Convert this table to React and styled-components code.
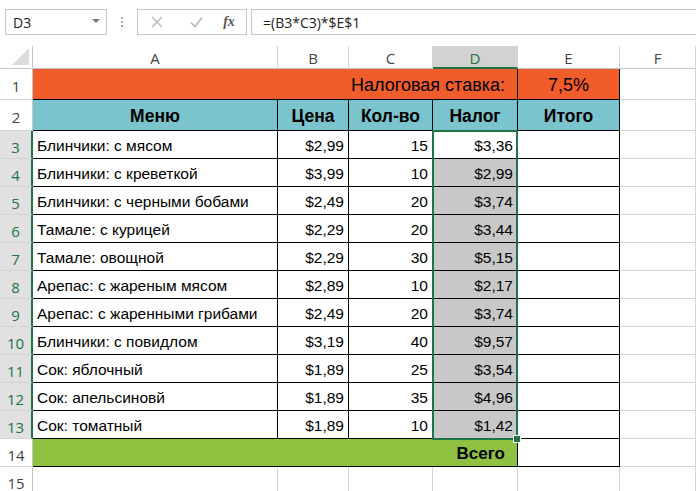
import styled, { createGlobalStyle, css } from 'styled-components'

const Global = createGlobalStyle`
  html, body { margin: 0; padding: 0; background: #fff; }
  body { width: 696px; height: 491px; overflow: hidden; font-family: "Liberation Sans", Arial, sans-serif; }
`

const GREEN = '#217346'
const GRID = '#d4d4d4'
const ORANGE = '#f15c2b'
const TEAL = '#7bc4cd'
const LIME = '#8dc13f'
const GREY = '#c8c8c8'

const TopBar = styled.div`
  display: flex;
  align-items: center;
  height: 46px;
  padding: 0 0 0 5px;
  box-sizing: border-box;
`
const NameBox = styled.div`
  display: flex;
  align-items: center;
  justify-content: space-between;
  width: 102px;
  height: 26px;
  margin-top: -2px;
  box-sizing: border-box;
  border: 1px solid #c6c6c6;
  padding: 0 6px 0 7px;
  font-family: "Open Sans", "Noto Sans", sans-serif;
  font-size: 14px;
  color: #222;
`
const Caret = styled.span`
  width: 0;
  height: 0;
  border-left: 4px solid transparent;
  border-right: 4px solid transparent;
  border-top: 4px solid #777;
  margin-top: -2px;
`
const Dots = styled.div`
  display: flex;
  flex-direction: column;
  gap: 2px;
  margin: -2px 14px 0 14px;
  span { width: 2px; height: 2px; background: #aaa; }
`
const FxBox = styled.div`
  display: flex;
  align-items: center;
  width: 110px;
  height: 26px;
  margin-top: -2px;
  box-sizing: border-box;
  border: 1px solid #c6c6c6;
`
const FxIcon = styled.span`
  width: 26px;
  display: flex;
  justify-content: center;
  color: #555;
  font-family: "Liberation Serif", serif;
  font-style: italic;
  font-size: 14px;
  font-weight: bold;
`
const Formula = styled.div`
  flex: 1;
  height: 26px;
  margin: -2px 0 0 4px;
  box-sizing: border-box;
  border: 1px solid #c6c6c6;
  border-right: none;
  display: flex;
  align-items: center;
  padding-left: 11px;
  font-family: "Open Sans", "Noto Sans", sans-serif;
  font-size: 14px;
  color: #222;
`

const Sheet = styled.div`
  position: relative;
  display: grid;
  grid-template-columns: 33px 245px 71px 84px 85px 102px 1fr;
  grid-template-rows: 23px 31px 31px repeat(13, 28px);
`

const Head = styled.div`
  box-sizing: border-box;
  display: flex;
  align-items: center;
  justify-content: center;
  font-family: "Open Sans", "Noto Sans", sans-serif;
  font-size: 15px;
  color: #444;
  background: #fff;
  border-right: 1px solid ${GRID};
  border-bottom: 1px solid #c6c6c6;
  ${(p) => p.$sel && css`
    background: #e1e1e1;
    color: ${GREEN};
  `}
`
const ColHead = styled(Head)`
  padding-top: 2px;
  ${(p) => p.$sel && css`
    background: #d2d2d2;
    border-bottom: 2px solid ${GREEN};
  `}
`
const RowHead = styled(Head)`
  padding-top: 4px;
  border-right: 1px solid #c6c6c6;
  border-bottom: 1px solid ${GRID};
  ${(p) => p.$sel && css`
    border-right: 2px solid ${GREEN};
  `}
`
const Corner = styled(Head)`
  position: relative;
  border-right: 1px solid #c6c6c6;
  &::after {
    content: '';
    position: absolute;
    right: 3px;
    bottom: 3px;
    border-left: 17px solid transparent;
    border-bottom: 17px solid #dcdcdc;
  }
`

const Cell = styled.div`
  box-sizing: border-box;
  display: flex;
  align-items: center;
  justify-content: ${(p) => p.$align || 'flex-start'};
  padding: 2px 4px 0 4px;
  font-size: 15.5px;
  color: #000;
  white-space: nowrap;
  background: ${(p) => p.$bg || '#fff'};
  font-weight: ${(p) => (p.$bold ? 'bold' : 'normal')};
  border-right: 1px solid ${(p) => (p.$table ? '#000' : GRID)};
  border-bottom: 1px solid ${(p) => (p.$table ? '#000' : GRID)};
  grid-column: ${(p) => p.$span || 'auto'};
`
const BigCell = styled(Cell)`
  font-size: 18px;
  padding-right: ${(p) => (p.$align === 'flex-end' ? '12px' : '4px')};
`
const HeadCell = styled(Cell)`
  font-size: 17.5px;
  font-weight: bold;
  background: ${TEAL};
  justify-content: center;
`

const Selection = styled.div`
  position: absolute;
  grid-column: 5 / 6;
  grid-row: 4 / 15;
  inset: -1px 0 -1px -1px;
  border: 2px solid ${GREEN};
  pointer-events: none;
`
const Handle = styled.span`
  position: absolute;
  right: -5px;
  bottom: -5px;
  width: 6px;
  height: 6px;
  background: ${GREEN};
  border: 1px solid #fff;
`

const rows = [
  ['Блинчики: с мясом', '$2,99', '15', '$3,36'],
  ['Блинчики: с креветкой', '$3,99', '10', '$2,99'],
  ['Блинчики: с черными бобами', '$2,49', '20', '$3,74'],
  ['Тамале: с курицей', '$2,29', '20', '$3,44'],
  ['Тамале: овощной', '$2,29', '30', '$5,15'],
  ['Арепас: с жареным мясом', '$2,89', '10', '$2,17'],
  ['Арепас: с жаренными грибами', '$2,49', '20', '$3,74'],
  ['Блинчики: с повидлом', '$3,19', '40', '$9,57'],
  ['Сок: яблочный', '$1,89', '25', '$3,54'],
  ['Сок: апельсиновй', '$1,89', '35', '$4,96'],
  ['Сок: томатный', '$1,89', '10', '$1,42'],
]

const CrossIcon = () => (
  <svg width="38" height="14" viewBox="0 0 38 14">
    <path d="M14 2 L24 12 M24 2 L14 12" stroke="#b5b5b5" strokeWidth="1.3" fill="none" />
  </svg>
)
const CheckIcon = () => (
  <svg width="40" height="14" viewBox="0 0 40 14">
    <path d="M15 7.5 L19 11.5 L26 2.5" stroke="#b5b5b5" strokeWidth="1.5" fill="none" />
  </svg>
)

const Row = ({ n, data }) => {
  const [name, price, qty, tax] = data
  return (
    <>
      <RowHead $sel>{n}</RowHead>
      <Cell $table>{name}</Cell>
      <Cell $table $align="flex-end">{price}</Cell>
      <Cell $table $align="flex-end">{qty}</Cell>
      <Cell $table $align="flex-end" $bg={n === 3 ? '#fff' : GREY}>
        {tax}
      </Cell>
      <Cell $table />
      <Cell />
    </>
  )
}

export default function App() {
  return (
    <>
      <Global />
      <TopBar>
        <NameBox>
          D3
          <Caret />
        </NameBox>
        <Dots>
          <span />
          <span />
          <span />
        </Dots>
        <FxBox>
          <CrossIcon />
          <CheckIcon />
          <FxIcon>fx</FxIcon>
        </FxBox>
        <Formula>=(B3*C3)*$E$1</Formula>
      </TopBar>
      <Sheet>
        <Corner />
        {['A', 'B', 'C', 'D', 'E', 'F'].map((c) => (
          <ColHead key={c} $sel={c === 'D'}>
            {c}
          </ColHead>
        ))}

        <RowHead>1</RowHead>
        <BigCell $table $bg={ORANGE} $span="span 4" $align="flex-end">
          Налоговая ставка:
        </BigCell>
        <BigCell $table $bg={ORANGE} $align="center">
          7,5%
        </BigCell>
        <Cell />

        <RowHead>2</RowHead>
        {['Меню', 'Цена', 'Кол-во', 'Налог', 'Итого'].map((h) => (
          <HeadCell key={h} $table>
            {h}
          </HeadCell>
        ))}
        <Cell />

        {rows.map((r, i) => (
          <Row key={i} n={i + 3} data={r} />
        ))}

        <RowHead>14</RowHead>
        <BigCell $table $bold $bg={LIME} $span="span 4" $align="flex-end" style={{ fontSize: 17 }}>
          Всего
        </BigCell>
        <Cell $table />
        <Cell />

        <RowHead>15</RowHead>
        <Cell />
        <Cell />
        <Cell />
        <Cell />
        <Cell />
        <Cell />

        <Selection>
          <Handle />
        </Selection>
      </Sheet>
    </>
  )
}
